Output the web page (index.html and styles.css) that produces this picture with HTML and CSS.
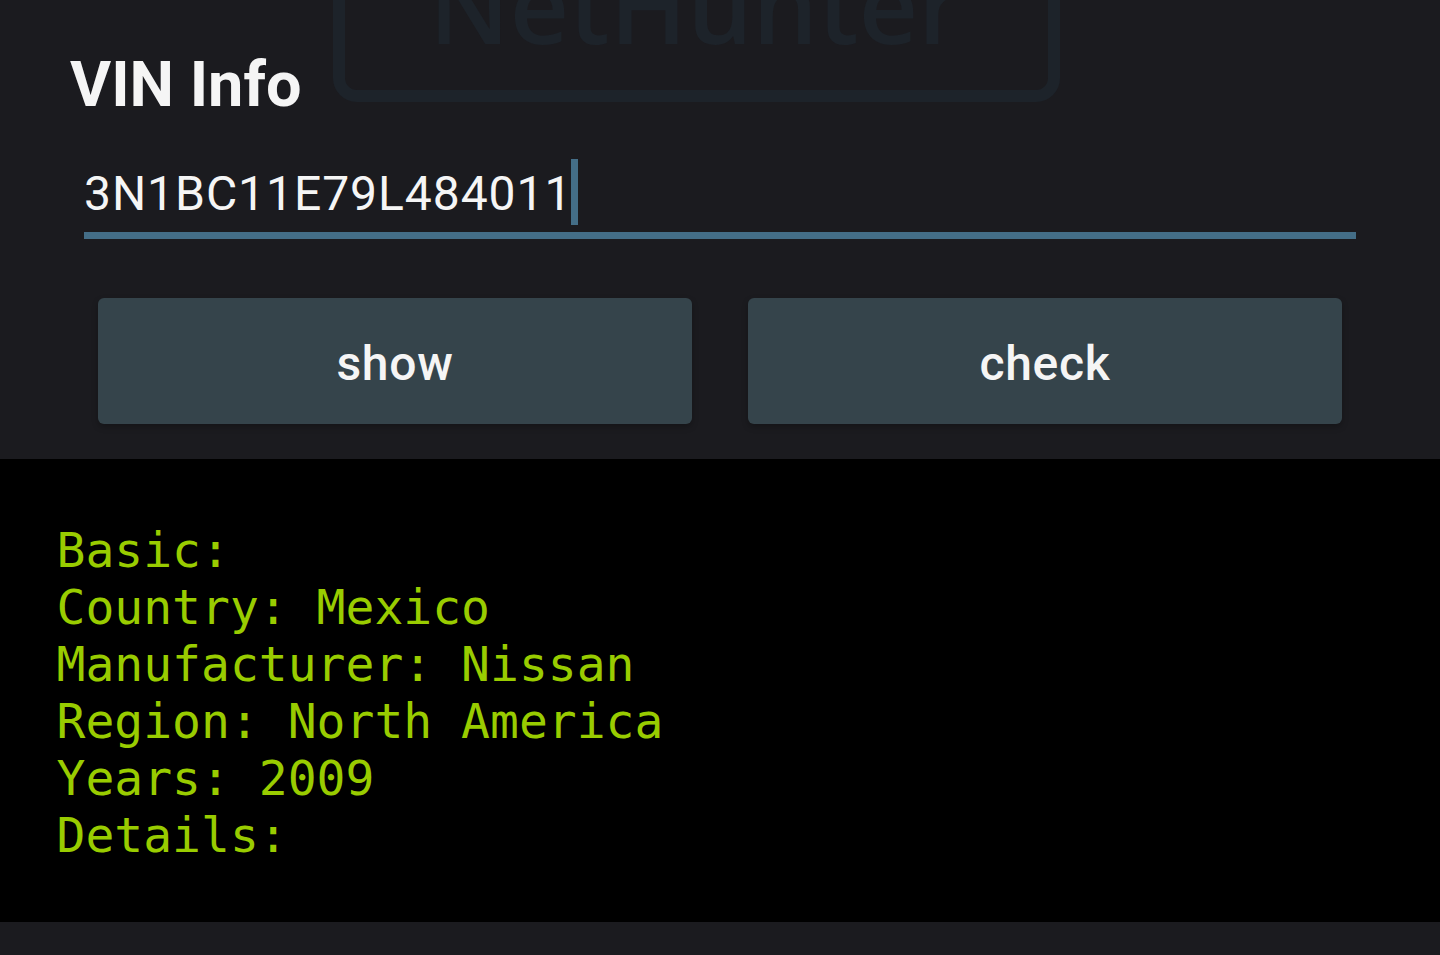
FILE: index.html
```html
<!DOCTYPE html>
<html lang="en">
<head>
<meta charset="utf-8">
<title>VIN Info</title>
<link rel="stylesheet" href="styles.css">
</head>
<body>
<div class="screen">
  <div class="watermark"><span class="watermark-text">NetHunter</span></div>
  <header class="panel">
    <h1 class="title">VIN Info</h1>
    <div class="field">
      <span class="field-value">3N1BC11E79L484011</span><span class="caret"></span>
    </div>
    <div class="actions">
      <button class="action" type="button">show</button>
      <button class="action" type="button">check</button>
    </div>
  </header>
  <pre class="output">Basic:
Country: Mexico
Manufacturer: Nissan
Region: North America
Years: 2009
Details:</pre>
</div>
</body>
</html>
```
FILE: styles.css
```css
* { box-sizing: border-box; }
html, body { margin: 0; height: 100%; }
body { background: #1b1b1f; overflow: hidden; }
.screen { position: relative; height: 955px; overflow: hidden; display: flex; flex-direction: column; }
.watermark {
  position: absolute; left: 333px; top: -60px; width: 727px; height: 162px;
  border: 12px solid #1d232a; border-radius: 24px;
  filter: blur(.6px);
}
.watermark-text {
  position: absolute; left: 84px; top: -2px;
  font: 600 103px/108px "Open Sans", sans-serif; color: #1d232a; white-space: nowrap;
}
.panel { position: relative; height: 459px; padding: 51px 84px 0; display: flex; flex-direction: column; }
.title {
  margin: 0 0 0 -14px; font: 700 63px/68px Roboto, sans-serif; color: #f5f5f5;
}
.field {
  margin-top: 40px; height: 80px; border-bottom: 7px solid #446e87;
  display: flex; align-items: flex-start;
}
.field-value { font: 400 48px/69px Roboto, sans-serif; color: #f5f5f5; letter-spacing: .95px; }
.caret { width: 7px; height: 66px; background: #446e87; margin-left: -1px; }
.actions { margin-top: 59px; padding: 0 14px; display: flex; gap: 56px; }
.action {
  flex: 1; height: 126px; border: 0; border-radius: 6px; background: #35444b;
  color: #f5f5f5; font: 500 48px/56px Roboto, sans-serif; letter-spacing: .7px; padding: 6px 0 0;
  box-shadow: 0 3px 6px rgba(0,0,0,.25);
}
.output {
  margin: 0; height: 463px; background: #000; color: #99cc00;
  padding: 63px 56.5px 0; font: 400 48px/57px "DejaVu Sans Mono", monospace;
}
```
